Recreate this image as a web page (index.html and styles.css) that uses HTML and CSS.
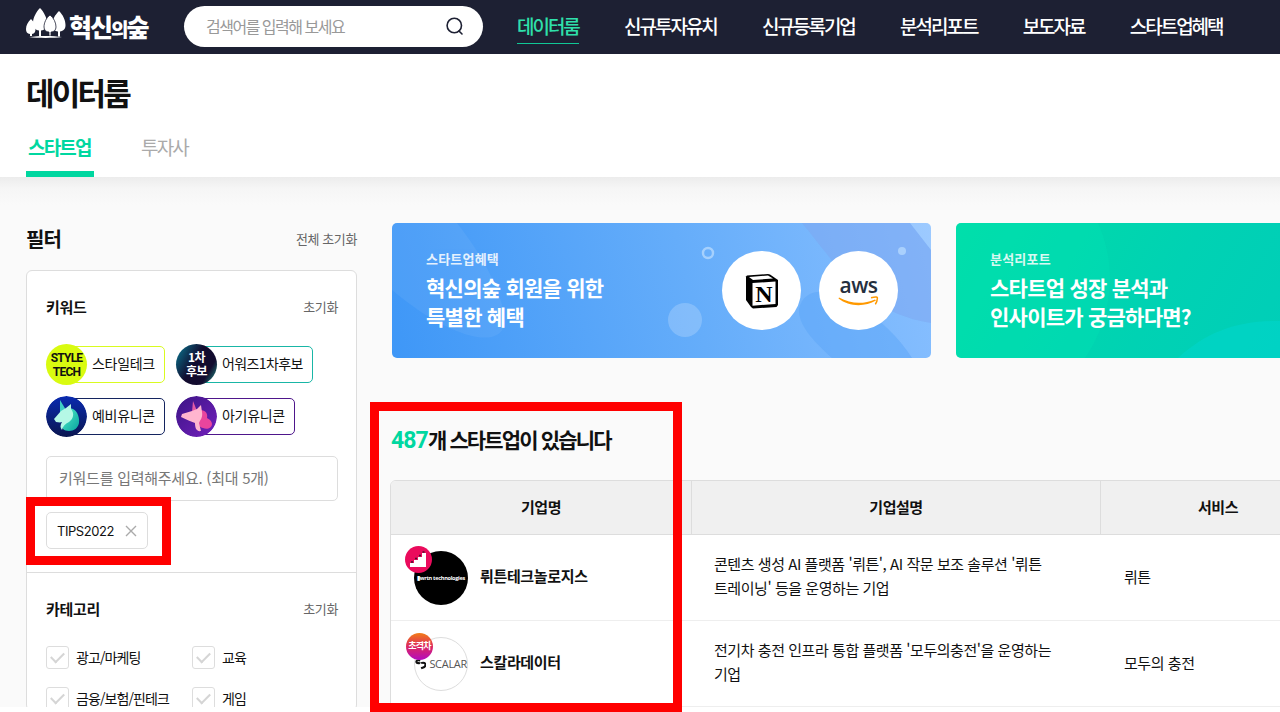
FILE: index.html
```html
<!DOCTYPE html>
<html lang="ko">

<head>
    <meta charset="UTF-8">
    <title>혁신의숲 데이터룸</title>
    <link rel="stylesheet" href="styles.css">
</head>

<body>
    <div class="page">
        <header class="topbar">
            <a class="logo">
                <svg width="42" height="34" viewBox="0 0 42 34" fill="#fff">
                    <path d="M14 1c4 4 7 10 7 15 0 4-2 7-6 7.500v6h-2v-6c-4-.5-6-3.500-6-7.500 0-5 3-11 7-15z" />
                    <path d="M5 12c3 3 4.500 6 4.500 10 0 3-1 4.500-3.500 5v2H4v-2c-3-.5-4-2-4-5 0-4 2-7 5-10z" />
                    <path d="M33 4c4 4 6.500 9 6.500 14 0 4-2 6-5.500 6.500v5h-2v-5c-4-.5-6-2.500-6-6.500 0-5 3-10 7-14z" />
                    <path d="M24 8c4 3 6 8 6 12 0 3-2 5-5 5v4h-2v-4c-3 0-5-2-5-5 0-4 2-9 6-12z" stroke="#1d2033" stroke-width=".8" />
                    <path d="M3 30c10-1.500 24-1.500 33 0-9 1.200-24 1.200-33 0z" />
                </svg>
                <span class="logo-text">혁신<small>의</small>숲</span>
            </a>
            <div class="search">
                <span>검색어를 입력해 보세요</span>
                <svg width="20" height="20" viewBox="0 0 20 20" fill="none" stroke="#1d2033" stroke-width="1.6">
                    <circle cx="9.3" cy="9.5" r="7.2" />
                    <path d="M14 15l3 3" stroke-linecap="round" />
                </svg>
            </div>
            <nav class="menu">
                <a class="on">데이터룸</a>
                <a>신규투자유치</a>
                <a>신규등록기업</a>
                <a>분석리포트</a>
                <a>보도자료</a>
                <a>스타트업혜택</a>
            </nav>
        </header>

        <div class="heading">
            <h1>데이터룸</h1>
            <div class="tabs">
                <a class="tab on">스타트업</a>
                <a class="tab">투자사</a>
            </div>
        </div>

        <main class="content">
            <aside class="filter">
                <div class="filter-top">
                    <h2>필터</h2>
                    <span class="reset">전체 초기화</span>
                </div>
                <div class="filter-box">
                    <section class="group keyword">
                        <div class="group-top">
                            <h3>키워드</h3>
                            <span class="reset">초기화</span>
                        </div>
                        <div class="chips">
                            <div class="chip lime">
                                <span class="chip-icon style-tech">STYLE<br>TECH</span>
                                <span class="chip-name">스타일테크</span>
                            </div>
                            <div class="chip teal">
                                <span class="chip-icon award">1차<br>후보</span>
                                <span class="chip-name">어워즈1차후보</span>
                            </div>
                            <div class="chip navy">
                                <svg class="chip-icon" viewBox="0 0 41 41">
                                    <defs>
                                        <linearGradient id="navy" x1="0" y1="0" x2="0" y2="1">
                                            <stop offset="0" stop-color="#0a2bb0" />
                                            <stop offset="1" stop-color="#0b1650" />
                                        </linearGradient>
                                        <linearGradient id="mint" x1="0" y1="0" x2="1" y2="1">
                                            <stop offset="0" stop-color="#55efc8" />
                                            <stop offset="1" stop-color="#08a3a0" />
                                        </linearGradient>
                                    </defs>
                                    <circle cx="20.5" cy="20.5" r="20.5" fill="url(#navy)" />
                                    <path d="M22 12c8-1 12 8 11 15-1 5-5 8-10 8-5 0-8-3-6-6 5-3 8-8 5-17z" fill="url(#mint)" />
                                    <path d="M14 4l6 10-6 3z" fill="#3fcfc5" />
                                    <path d="M25 8v5c4 5 2 10-2 13-4 2-6 4-7 8-2-2-2-5 0-8-2 1-4 0-6 0l-2-3 7-8 5-3z" fill="#b5f8e6" />
                                </svg>
                                <span class="chip-name">예비유니콘</span>
                            </div>
                            <div class="chip purple">
                                <svg class="chip-icon" viewBox="0 0 41 41">
                                    <defs>
                                        <linearGradient id="violet" x1="0" y1="0" x2="1" y2="1">
                                            <stop offset="0" stop-color="#3b1485" />
                                            <stop offset="1" stop-color="#7420bd" />
                                        </linearGradient>
                                    </defs>
                                    <circle cx="20.5" cy="20.5" r="20.5" fill="url(#violet)" />
                                    <path d="M24 14c6 0 8 4 7 8 2 1 5 3 5 6 0 4-5 6-9 4-5-1-7-6-3-18z" fill="#e9459d" />
                                    <path d="M17 5l4 10-5 1z" fill="#e45aa5" />
                                    <path d="M25 9l1 7c1 6-2 8-3 11l2 8c-5 1-6-4-6-8-3-1-8-3-14-6l1-3 10-3 5-2z" fill="#ffb5cf" />
                                </svg>
                                <span class="chip-name">아기유니콘</span>
                            </div>
                        </div>
                        <div class="keyword-input">키워드를 입력해주세요. (최대 5개)</div>
                        <div class="tag">
                            <span>TIPS2022</span>
                            <svg width="12" height="12" viewBox="0 0 12 12" stroke="#aaa" stroke-width="1.4">
                                <path d="M1 1l10 10M11 1L1 11" />
                            </svg>
                        </div>
                    </section>
                    <section class="group category">
                        <div class="group-top">
                            <h3>카테고리</h3>
                            <span class="reset">초기화</span>
                        </div>
                        <div class="checks">
                            <label><i class="check"></i><span>광고/마케팅</span></label>
                            <label><i class="check"></i><span>교육</span></label>
                            <label><i class="check"></i><span>금융/보험/핀테크</span></label>
                            <label><i class="check"></i><span>게임</span></label>
                        </div>
                    </section>
                </div>
            </aside>

            <div class="list">
                <div class="banners">
                    <div class="banner blue">
                        <svg class="banner-bg" width="539" height="135" viewBox="0 0 539 135">
                            <path d="M0 0h65c30 38 50 80 47 103-8 25-60 8-112-36z" fill="#fff" opacity=".06" />
                            <path d="M410 0h108l21 27v73c-65-10-92-55-129-100z" fill="#7da6f0" opacity=".5" />
                            <path d="M518 0h21v27z" fill="#fff" opacity=".18" />
                            <path d="M407 86c5-22 30-22 56-5 25 14 45 35 57 54h-80c-20-18-34-34-33-49z" fill="#5ba5f7" opacity=".5" />
                            <circle cx="316" cy="30" r="5" fill="none" stroke="#a5d0fd" stroke-width="2.4" />
                            <circle cx="293" cy="97" r="17" fill="#fff" opacity=".2" />
                            <circle cx="510" cy="28" r="4" fill="#a9d0fd" />
                        </svg>
                        <div class="banner-text">
                            <p>스타트업혜택</p>
                            <strong>혁신의숲 회원을 위한<br>특별한 혜택</strong>
                        </div>
                        <div class="partners">
                            <div class="partner">
                                <svg width="36" height="36" viewBox="0 0 36 36">
                                    <path d="M2 3.500l1-1 21-1.500 2 .5 8 5.500v25l-1.500 2L9 35.500 7 34l-5-7z" fill="#000" />
                                    <path d="M5 4l19-1.500 5 3-20 1.500z" fill="#fff" />
                                    <path d="M8.500 10l23-1.500v22.500l-23 1.700z" fill="#fff" />
                                    <text x="20" y="28.500" text-anchor="middle" class="notion-n">N</text>
                                </svg>
                            </div>
                            <div class="partner aws">
                                <span>aws</span>
                                <svg width="42" height="11" viewBox="0 0 42 11">
                                    <path d="M1 1.500c12 6.500 24 7 36 2l1 1C27 11 11 11 .5 2.500z" fill="#f90" />
                                    <path d="M33 1.800c5-1.200 7-1 6.300 1 0 2-1 4-2 5.500" fill="none" stroke="#f90" stroke-width="1.500" />
                                </svg>
                            </div>
                        </div>
                    </div>
                    <div class="banner green">
                        <svg class="banner-bg" width="539" height="135" viewBox="0 0 539 135">
                            <path d="M0 0h142c20 45 14 95-13 135H0z" fill="#00e3b5" opacity=".35" />
                            <path d="M222 135c28-26 60-38 102-37v37z" fill="#00d5cc" opacity=".6" />
                        </svg>
                        <div class="banner-text">
                            <p>분석리포트</p>
                            <strong>스타트업 성장 분석과<br>인사이트가 궁금하다면?</strong>
                        </div>
                    </div>
                </div>

                <h2 class="count"><em>487</em>개 스타트업이 있습니다</h2>

                <div class="table">
                    <div class="row head">
                        <div class="cell">기업명</div>
                        <div class="cell">기업설명</div>
                        <div class="cell">서비스</div>
                    </div>
                    <div class="row">
                        <div class="cell company">
                            <div class="company-logo wrtn">
                                <span>▮wrtn technologies</span>
                                <svg class="badge" viewBox="0 0 27 27">
                                    <circle cx="13.500" cy="13.500" r="13.500" fill="#ea0b5c" />
                                    <path d="M5 21v-4h4v-3h4v-3h4V7h4v14z" fill="#fff" />
                                    <path d="M6 16h2M10 12.500h2M14 9.500h2M17.500 6h2" stroke="#43152d" stroke-width="1.500" />
                                </svg>
                            </div>
                            <b>뤼튼테크놀로지스</b>
                        </div>
                        <div class="cell desc">콘텐츠 생성 AI 플랫폼 '뤼튼', AI 작문 보조 솔루션 '뤼튼<br>트레이닝' 등을 운영하는 기업</div>
                        <div class="cell service">뤼튼</div>
                    </div>
                    <div class="row">
                        <div class="cell company">
                            <div class="company-logo scalar">
                                <svg width="13" height="12" viewBox="0 0 13 12" fill="none" stroke="#111" stroke-width="2.400">
                                    <path d="M6 2C2 1 1 3 2 4.500c1 1 3 0 4 1M7 5c3-1 5 0 5 2 0 3-3 3-5 4" />
                                </svg>
                                <span>SCALAR</span>
                                <div class="badge gap">초격차</div>
                            </div>
                            <b>스칼라데이터</b>
                        </div>
                        <div class="cell desc">전기차 충전 인프라 통합 플랫폼 '모두의충전'을 운영하는<br>기업</div>
                        <div class="cell service">모두의 충전</div>
                    </div>
                    <div class="row"></div>
                </div>
            </div>
        </main>
    </div>

    <div class="mark mark-tag"></div>
    <div class="mark mark-list"></div>
</body>

</html>
```
FILE: styles.css
```css
* {
    box-sizing: border-box;
    margin: 0;
    padding: 0;
}

body {
    position: relative;
    height: 712px;
    overflow: hidden;
    background-color: #fff;
    font-family: "Noto Sans CJK KR", sans-serif;
    font-size: 15px;
    color: #111;
    white-space: nowrap;
}

.page {
    height: 707px;
    overflow: hidden;
    background-color: #fafafa;
}

/* top bar */
.topbar {
    display: flex;
    align-items: center;
    height: 54px;
    padding-left: 26px;
    background-color: #1d2033;
    color: #fff;
}

.logo {
    display: flex;
    width: 158px;
    height: 38px;
    margin-top: -7px;
    align-items: center;
}

.logo-text {
    margin-left: 1px;
    font-size: 25px;
    font-weight: 900;
    line-height: 34px;
    letter-spacing: -2px;
    padding-top: 7px;
}

.logo-text small {
    font-size: 19px;
    font-weight: 900;
}

.search {
    display: flex;
    align-items: center;
    justify-content: space-between;
    width: 299px;
    height: 41px;
    margin-top: -2px;
    padding: 0 18px 0 22px;
    border-radius: 21px;
    background-color: #fff;
    color: #999;
    font-size: 16px;
    letter-spacing: -1.5px;
}

.search span {
    padding-bottom: 1px;
}

.menu {
    display: flex;
    gap: 45.3px;
    margin-left: 34px;
    height: 35px;
}

.menu a {
    height: 35px;
    font-size: 19px;
    font-weight: 500;
    line-height: 31px;
    letter-spacing: -2.03px;
}

.menu .on {
    height: 34px;
    color: #2fe0ab;
    border-bottom: 1.5px solid #10c796;
}

/* page title */
.heading {
    height: 123px;
    padding: 16px 26px 0;
    background-color: #fff;
}

.heading h1 {
    height: 44px;
    font-size: 31px;
    font-weight: 700;
    line-height: 44px;
    letter-spacing: -2.8px;
}

.tabs {
    display: flex;
    gap: 45px;
    margin-top: 17px;
}

.tab {
    height: 46px;
    padding: 0 1px 0 2px;
    font-size: 19px;
    line-height: 32px;
    letter-spacing: -1.8px;
    color: #aaa;
}

.tab.on {
    width: 68px;
    color: #00d7a0;
    font-weight: 700;
    border-bottom: 6px solid #00d7a0;
}

/* content */
.content {
    display: flex;
    padding: 46px 0 0 26px;
    background: linear-gradient(#ececec, #f6f6f6 12px, #fafafa 28px);
}

.filter {
    flex: none;
    width: 331px;
}

.filter-top,
.group-top {
    display: flex;
    align-items: center;
    justify-content: space-between;
}

.filter-top {
    height: 30px;
    margin-bottom: 17px;
}

.filter-top h2 {
    font-size: 20px;
    letter-spacing: -1px;
}

.reset {
    font-size: 13px;
    letter-spacing: -0.4px;
    color: #666;
}

.filter-box {
    border: 1px solid #ddd;
    border-radius: 6px;
    background-color: #fff;
}

.group {
    padding: 0 18px 0 19px;
}

.keyword {
    height: 302px;
    padding-top: 23px;
    border-bottom: 1px solid #ddd;
}

.group-top {
    height: 24px;
}

.group-top h3 {
    font-size: 15px;
    font-weight: 700;
    letter-spacing: -0.3px;
}

.chips {
    display: grid;
    grid-template-columns: 118px max-content;
    gap: 11px 12px;
    margin-top: 26px;
}

.chip {
    position: relative;
    display: flex;
    align-items: center;
    justify-self: start;
    height: 41px;
}

.chip-icon {
    width: 41px;
    height: 41px;
    border-radius: 50%;
    text-align: center;
    z-index: 1;
}

.chip-name {
    height: 37px;
    margin-left: -20px;
    padding: 0 9px 0 24px;
    border: 1.5px solid;
    border-radius: 5px;
    font-size: 14px;
    line-height: 33px;
    letter-spacing: -0.3px;
}

.lime .chip-name {
    border-color: #d9fb20;
}

.teal .chip-name {
    border-color: #19b6a6;
    letter-spacing: -0.6px;
}

.navy .chip-name {
    border-color: #14245f;
}

.purple .chip-name {
    border-color: #4e168b;
}

.style-tech {
    padding-top: 7px;
    background-color: #d9fb10;
    font-family: Roboto, sans-serif;
    font-size: 12px;
    font-weight: 700;
    line-height: 14px;
    letter-spacing: -0.8px;
}

.award {
    padding-top: 6px;
    background: linear-gradient(120deg, #087b94, #120b2e 45%, #120b2e 75%, #23a591);
    color: #fff;
    font-size: 12px;
    font-weight: 700;
    line-height: 14px;
    letter-spacing: -0.5px;
}

.keyword-input {
    width: 292px;
    height: 45px;
    margin-top: 19px;
    padding-left: 12px;
    border: 1px solid #ddd;
    border-radius: 5px;
    line-height: 42px;
    letter-spacing: -0.25px;
    color: #777;
}

.tag {
    display: flex;
    align-items: center;
    justify-content: space-between;
    width: 102px;
    height: 37px;
    margin-top: 11px;
    padding: 0 10px;
    border: 1px solid #ddd;
    border-radius: 5px;
    font-family: Inter, sans-serif;
    font-size: 13px;
    letter-spacing: -0.45px;
}

.category {
    padding-top: 23px;
}

.checks {
    display: grid;
    grid-template-columns: 146px 1fr;
    row-gap: 18px;
    margin-top: 26px;
}

.checks label {
    display: flex;
    align-items: center;
    height: 23px;
    font-size: 14px;
    letter-spacing: -0.9px;
}

.checks label span {
    padding-bottom: 2px;
}

.check {
    display: flex;
    justify-content: center;
    width: 23px;
    height: 23px;
    margin-right: 7px;
    border: 1px solid #ddd;
    border-radius: 3px;
}

.check::after {
    content: "";
    width: 11px;
    height: 6px;
    margin-top: 5px;
    border: solid #d5d5d5;
    border-width: 0 0 2px 2px;
    transform: rotate(-45deg);
}

/* banners */
.list {
    flex: none;
    width: 1103px;
    margin-left: 33px;
}

.banners {
    display: flex;
    gap: 25px;
    margin-left: 2px;
}

.banner {
    position: relative;
    flex: none;
    display: flex;
    width: 539px;
    height: 135px;
    border-radius: 5px;
    overflow: hidden;
    color: #fff;
}

.blue {
    background: linear-gradient(75deg, #3e97f7, #65adfa 55%, #88bfff);
}

.green {
    background: linear-gradient(120deg, #00dda6, #00d2b3 40%, #00c8c0);
}

.banner-bg {
    position: absolute;
    left: 0;
    top: 0;
}

.banner-text {
    position: relative;
    width: 330px;
    padding: 26px 0 0 34px;
}

.banner-text p {
    font-size: 13px;
    font-weight: 700;
    line-height: 20px;
    letter-spacing: 0.2px;
    opacity: 0.85;
}

.banner-text strong {
    display: block;
    margin-top: 4px;
    font-size: 21px;
    font-weight: 700;
    line-height: 29px;
    letter-spacing: -0.75px;
}

.partners {
    position: relative;
    display: flex;
    gap: 18px;
    padding-top: 28px;
}

.partner {
    display: flex;
    align-items: center;
    justify-content: center;
    width: 79px;
    height: 79px;
    border-radius: 50%;
    background-color: #fff;
}

.notion-n {
    font: bold 24px "Liberation Serif", serif;
}

.aws {
    flex-direction: column;
    font-family: "Open Sans", sans-serif;
    font-size: 21px;
    font-weight: 600;
    line-height: 22px;
    letter-spacing: -0.5px;
    color: #252f3e;
}

/* company table */
.count {
    height: 32px;
    margin: 65px 0 25px 1px;
    font-size: 21px;
    line-height: 32px;
    letter-spacing: -1.85px;
}

.count em {
    font-style: normal;
    font-family: Roboto, sans-serif;
    font-size: 23px;
    letter-spacing: -0.9px;
    color: #00d7a0;
}

.table {
    border: 1px solid #ddd;
    border-radius: 6px 0 0 0;
    overflow: hidden;
    background-color: #fff;
}

.row {
    display: grid;
    grid-template-columns: 301px 409px 235px 1fr;
    align-items: center;
    height: 86px;
    border-bottom: 1px solid #eee;
}

.cell {
    padding-left: 23px;
    line-height: 24px;
    letter-spacing: -0.45px;
}

.head {
    height: 54px;
    background-color: #f0f0f0;
    border-bottom: 1px solid #ddd;
}

.head .cell {
    height: 53px;
    padding: 0;
    border-right: 1px solid #ddd;
    font-weight: 700;
    line-height: 51px;
    text-align: center;
}

.row .desc {
    padding: 0 0 3px 22px;
}

.row .service {
    padding-bottom: 2px;
}

.company {
    display: flex;
    align-items: center;
    gap: 12px;
}

.company b {
    padding-bottom: 4px;
    font-weight: 700;
    letter-spacing: -0.35px;
}

.company-logo {
    position: relative;
    display: flex;
    align-items: center;
    justify-content: center;
    width: 54px;
    height: 54px;
    border-radius: 50%;
}

.wrtn {
    background-color: #000;
    color: #fff;
    font: bold 5.6px "Open Sans", sans-serif;
}

.wrtn span {
    letter-spacing: -0.3px;
}

.scalar {
    border: 1px solid #ddd;
    font: 11px "Open Sans", sans-serif;
    color: #555;
    gap: 3px;
}

.scalar span {
    letter-spacing: -0.3px;
}

.badge {
    position: absolute;
    left: -9px;
    top: -5px;
    width: 27px;
    height: 27px;
}

.gap {
    border-radius: 50%;
    background: linear-gradient(#f27d17, #dc2860 50%, #b40bc0);
    color: #fff;
    font: bold 9px "Noto Sans CJK KR", sans-serif;
    line-height: 26px;
    text-align: center;
    letter-spacing: -0.8px;
}

/* red highlight frames */
.mark {
    position: absolute;
    border: 9px solid #f00;
}

.mark-tag {
    left: 26px;
    top: 497px;
    width: 145px;
    height: 68px;
}

.mark-list {
    left: 370px;
    top: 402px;
    width: 312px;
    height: 310px;
}
```
